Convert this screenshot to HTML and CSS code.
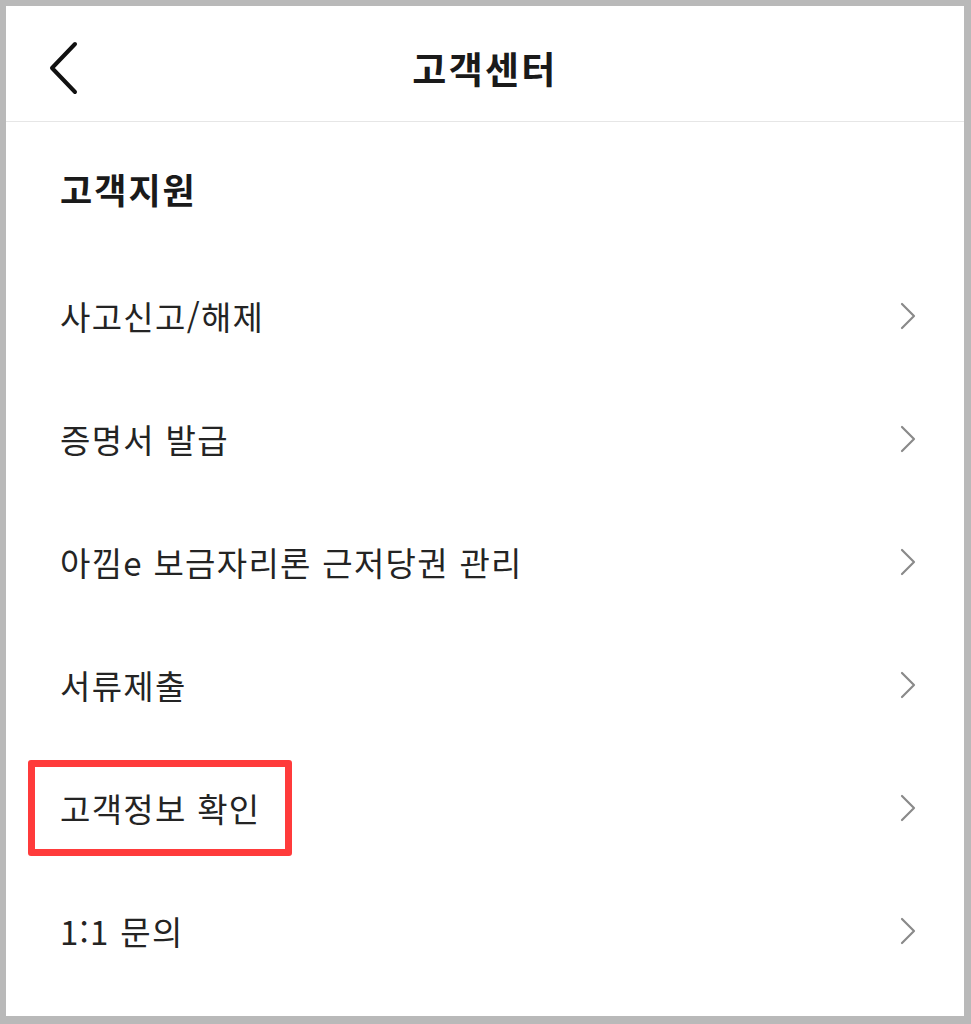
FILE: index.html
```html
<!DOCTYPE html>
<html lang="ko">
<head>
<meta charset="utf-8">
<title>고객센터</title>
<link rel="stylesheet" href="styles.css">
</head>
<body>
<div class="screen">
  <header class="topbar">
    <button class="back" aria-label="뒤로">
      <svg width="32" height="54" viewBox="0 0 32 54"><path d="M27 3 L4 27 L27 51" fill="none" stroke="#111" stroke-width="4" stroke-linecap="round" stroke-linejoin="round"/></svg>
    </button>
    <h1 class="title">고객센터</h1>
  </header>
  <section class="section">
    <h2 class="section-title">고객지원</h2>
    <ul class="menu">
      <li class="row"><span class="label">사고신고/해제</span><svg class="chev" width="18" height="28" viewBox="0 0 18 28"><path d="M3 2 L15 14 L3 26" fill="none" stroke="#8a8a8a" stroke-width="2.2" stroke-linecap="round" stroke-linejoin="round"/></svg></li>
      <li class="row"><span class="label">증명서 발급</span><svg class="chev" width="18" height="28" viewBox="0 0 18 28"><path d="M3 2 L15 14 L3 26" fill="none" stroke="#8a8a8a" stroke-width="2.2" stroke-linecap="round" stroke-linejoin="round"/></svg></li>
      <li class="row"><span class="label">아낌e 보금자리론 근저당권 관리</span><svg class="chev" width="18" height="28" viewBox="0 0 18 28"><path d="M3 2 L15 14 L3 26" fill="none" stroke="#8a8a8a" stroke-width="2.2" stroke-linecap="round" stroke-linejoin="round"/></svg></li>
      <li class="row"><span class="label">서류제출</span><svg class="chev" width="18" height="28" viewBox="0 0 18 28"><path d="M3 2 L15 14 L3 26" fill="none" stroke="#8a8a8a" stroke-width="2.2" stroke-linecap="round" stroke-linejoin="round"/></svg></li>
      <li class="row"><span class="label">고객정보 확인</span><span class="highlight"></span><svg class="chev" width="18" height="28" viewBox="0 0 18 28"><path d="M3 2 L15 14 L3 26" fill="none" stroke="#8a8a8a" stroke-width="2.2" stroke-linecap="round" stroke-linejoin="round"/></svg></li>
      <li class="row"><span class="label">1:1 문의</span><svg class="chev" width="18" height="28" viewBox="0 0 18 28"><path d="M3 2 L15 14 L3 26" fill="none" stroke="#8a8a8a" stroke-width="2.2" stroke-linecap="round" stroke-linejoin="round"/></svg></li>
    </ul>
  </section>
</div>
</body>
</html>
```
FILE: styles.css
```css
html, body {
  margin: 0;
  padding: 0;
}
body {
  background: #b9b9b9;
  font-family: "Noto Sans CJK KR", "Noto Sans", sans-serif;
  color: #222;
}
.screen {
  margin: 6px 7px 8px 6px;
  height: 1010px;
  background: #fff;
  overflow: hidden;
}
.topbar {
  position: relative;
  height: 116px;
  box-sizing: border-box;
  padding: 9px 0 0 42px;
  border-bottom: 1px solid #e6e6e6;
  display: flex;
  align-items: center;
}
.back {
  border: 0;
  background: none;
  padding: 0;
  display: flex;
  width: 32px;
  height: 54px;
  position: relative;
  z-index: 1;
}
.title {
  position: absolute;
  left: 0;
  right: 0;
  top: 9px;
  bottom: 0;
  margin: 0;
  display: flex;
  align-items: center;
  justify-content: center;
  font-size: 37px;
  font-weight: 700;
  letter-spacing: 2.3px;
  color: #1a1a1a;
}
.section-title {
  margin: 0;
  height: 132px;
  display: flex;
  align-items: center;
  padding-left: 54px;
  font-size: 35px;
  font-weight: 700;
  letter-spacing: 2px;
  color: #1a1a1a;
}
.menu {
  list-style: none;
  margin: 0;
  padding: 0;
}
.row {
  position: relative;
  height: 123px;
  display: flex;
  align-items: center;
  justify-content: space-between;
  padding: 0 47px 0 54px;
}
.label {
  font-size: 33px;
  font-weight: 400;
  letter-spacing: 1.3px;
  color: #242424;
}
.chev {
  display: block;
}
.highlight {
  position: absolute;
  left: 22px;
  top: 14px;
  width: 264px;
  height: 96px;
  box-sizing: border-box;
  border: 7px solid #ff3b3b;
  border-radius: 3px;
}
```
